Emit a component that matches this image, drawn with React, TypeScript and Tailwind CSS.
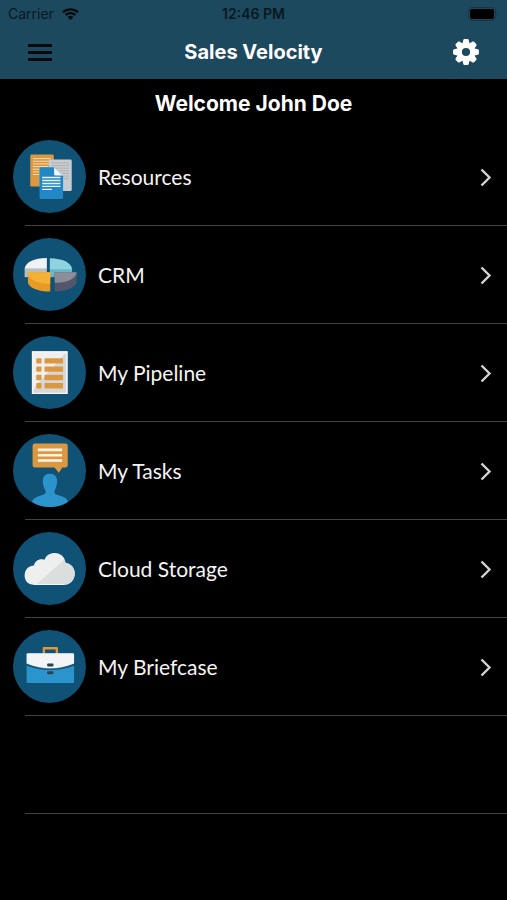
import type { ReactNode } from 'react';

function Badge({ top, children }: { top: number; children: ReactNode }) {
  return (
    <svg viewBox={`39 ${top} 220 220`} className="size-[73px] shrink-0" aria-hidden="true">
      <circle cx="149" cy={top + 110} r="110" fill="#0f5275" />
      {children}
    </svg>
  );
}

function ResourcesIcon() {
  return (
    <Badge top={33}>
      <rect x="91" y="77" width="71" height="96" rx="4" fill="#dc9840" />
      <path d="M99 89h54M99 97h54M99 105h50M99 113h46M99 121h22M99 129h20M99 137h20" stroke="#f3d9b4" strokeWidth="3" />
      <rect x="147" y="92" width="69" height="95" rx="4" fill="#c9cccf" />
      <path d="M155 102h53M155 110h53M155 118h53M180 126h28M188 134h20M192 142h16M192 150h16" stroke="#a9adb1" strokeWidth="2.5" />
      <path d="M123 115h40l27 27v65q0 4-4 4h-63q-4 0-4-4v-88q0-4 4-4z" fill="#2288c5" />
      <path d="M163 115l25 25h-21q-4 0-4-4z" fill="#f3f6f8" />
      <path d="M127 146h55M127 155h55M127 164h55M127 173h55M127 182h29" stroke="#e6f1f8" strokeWidth="4" />
    </Badge>
  );
}

function CrmIcon() {
  return (
    <Badge top={27}>
      <path d="M74 119h67v26H74z" fill="#b9bdbf" />
      <path d="M141 87v33H74c2-20 28-33 67-33z" fill="#f1f2f3" />
      <path d="M150 119h67v26h-67z" fill="#62b9c9" />
      <path d="M150 88c39 1 65 13 67 33h-67z" fill="#8fd3df" />
      <path d="M84 130h68v58c-38 0-66-11-68-28z" fill="#e89b24" />
      <path d="M84 130h68v35c-38 0-66-12-68-35z" fill="#f3b236" />
      <path d="M164 130h67v29c-2 17-29 29-67 29z" fill="#53566b" />
      <path d="M164 130h67c-2 20-29 32-67 32z" fill="#8b8d9a" />
      <path d="M152 147h12v41h-12z" fill="#0f5275" />
    </Badge>
  );
}

function PipelineIcon() {
  return (
    <Badge top={26}>
      <path d="M96 72h107v129H96z" fill="#efefef" />
      <path d="M203 72v129H96l12-25z" fill="#d7d7d8" />
      <path d="M201 74v125H98V74z" fill="none" stroke="#f5f5f5" strokeWidth="4" />
      {[93, 118, 143, 168].map((y) => (
        <g key={y} fill="#dc9840">
          <rect x="109" y={y} width="16" height="16" rx="3" />
          <rect x="134" y={y} width="56" height="16" rx="2" />
        </g>
      ))}
    </Badge>
  );
}

function TasksIcon() {
  return (
    <Badge top={30}>
      <path d="M105 59h92q7 0 7 7v58q0 7-7 7h-9l-11 16-13-16h-59q-7 0-7-7V66q0-7 7-7z" fill="#dc9840" />
      <path d="M114 78h73M114 94h73M114 110h73" stroke="#fff5e6" strokeWidth="8" />
      <path d="M150 150c15 0 23 10 22 25-1 12-4 20-8 26-2 10 5 12 17 15 13 3 21 9 24 18-14 11-34 16-55 16s-40-5-54-16c3-9 12-15 25-18 11-3 18-5 16-15-4-6-7-14-8-26-1-15 6-25 21-25z" fill="#2b94cd" />
    </Badge>
  );
}

function CloudIcon() {
  const cloud = 'M101 188c-16 0-27-12-27-28 0-17 11-29 28-30 2-12 13-20 25-19q4 0 7 2c4-13 16-21 31-21 18 0 31 13 32 30 16 2 28 15 28 32 0 19-13 34-32 34z';
  return (
    <Badge top={29}>
      <path d={cloud} fill="#efefef" />
      <path d="M193 112q4 4 4 10c16 2 28 15 28 32 0 19-13 34-32 34h-84z" fill="#dcdddd" />
      <path d="M101 187h92" stroke="#f8f8f8" strokeWidth="3" />
    </Badge>
  );
}

function BriefcaseIcon() {
  return (
    <Badge top={29}>
      <path d="M132 102V84h39v18" fill="none" stroke="#dc9840" strokeWidth="7" strokeLinejoin="round" />
      <rect x="80" y="99" width="143" height="90" rx="4" fill="#2b94cd" />
      <path d="M80 130c44 21 99 21 143 0v7c-44 17-99 17-143 0z" fill="#1f4f69" />
      <path d="M84 99h135q4 0 4 4v27c-44 19-99 19-143 0v-27q0-4 4-4z" fill="#f2f4f6" />
      <rect x="142" y="130" width="19" height="9" rx="3" fill="#2b4250" />
      <rect x="142" y="153" width="19" height="9" rx="3" fill="#2b4250" />
    </Badge>
  );
}

function GearIcon() {
  return (
    <svg viewBox="-13 -13 26 26" className="size-[26px]" aria-hidden="true">
      <circle r="6.8" fill="none" stroke="#fff" strokeWidth="5.4" />
      {[0, 45, 90, 135, 180, 225, 270, 315].map((a) => (
        <path key={a} d="M-3.6-8.4L-2.7-12q.2-.9 1.1-.9h3.2q.9 0 1.1.9L3.6-8.4z" fill="#fff" transform={`rotate(${a})`} />
      ))}
    </svg>
  );
}

const items = [
  { label: 'Resources', Icon: ResourcesIcon },
  { label: 'CRM', Icon: CrmIcon },
  { label: 'My Pipeline', Icon: PipelineIcon },
  { label: 'My Tasks', Icon: TasksIcon },
  { label: 'Cloud Storage', Icon: CloudIcon },
  { label: 'My Briefcase', Icon: BriefcaseIcon },
];

export default function App() {
  return (
    <div className="min-h-screen bg-black font-['Inter',sans-serif] text-[#f4f4f4]">
      <header className="bg-[#1d495f]">
        <div className="grid h-[27px] grid-cols-[1fr_auto_1fr] items-center px-2 text-[14px] leading-5 text-[#071820]">
          <div className="flex items-center gap-2">
            <span>Carrier</span>
            <svg viewBox="0 0 17 12" className="h-3 w-[17px]" aria-hidden="true">
              <path d="M1 4.3a11 11 0 0 1 15 0M3.6 7a7.2 7.2 0 0 1 9.8 0" fill="none" stroke="#03090c" strokeWidth="2.2" />
              <path d="M8.500 12L5.600 9.100a4.200 4.200 0 0 1 5.800 0z" fill="#03090c" />
            </svg>
          </div>
          <time className="font-semibold">12:46 PM</time>
          <svg viewBox="0 0 31 14" className="h-[14px] w-[31px] justify-self-end" aria-hidden="true">
            <rect x="0.500" y="0.500" width="27" height="13" rx="3.500" fill="none" stroke="#153646" />
            <rect x="2" y="2" width="24" height="10" rx="2" fill="#000" />
            <path d="M29 5q2 2 0 4z" fill="#153646" />
          </svg>
        </div>
        <nav className="grid h-[52px] grid-cols-[1fr_auto_1fr] items-center px-7 pb-[2px]">
          <button type="button" aria-label="Menu" className="flex w-6 flex-col gap-1 py-2">
            <span className="h-[3px] bg-[#03090c]" />
            <span className="h-[3px] bg-[#03090c]" />
            <span className="h-[3px] bg-[#03090c]" />
          </button>
          <h1 className="text-[20px] leading-6 font-bold text-white">Sales Velocity</h1>
          <button type="button" aria-label="Settings" className="justify-self-end">
            <GearIcon />
          </button>
        </nav>
      </header>
      <main>
        <h2 className="pt-[13px] pb-3 text-center text-[21px] leading-6 font-bold text-white">Welcome John Doe</h2>
        <ul>
          {items.map(({ label, Icon }) => (
            <li key={label}>
              <a href="#" className="flex h-[97px] items-center gap-3 pr-[14px] pl-[13px]">
                <Icon />
                <span className="grow font-['Lato',sans-serif] text-[21px] leading-6">{label}</span>
                <svg viewBox="0 0 14 20" className="h-5 w-[14px]" aria-hidden="true">
                  <path d="M2.500 2.500L10.500 10.500L2.500 18.500" fill="none" stroke="#d4d4d4" strokeWidth="2.400" />
                </svg>
              </a>
              <div className="ml-[25px] h-px bg-[#414243]" />
            </li>
          ))}
          <li aria-hidden="true">
            <div className="h-[97px]" />
            <div className="ml-[25px] h-px bg-[#414243]" />
          </li>
        </ul>
      </main>
    </div>
  );
}
